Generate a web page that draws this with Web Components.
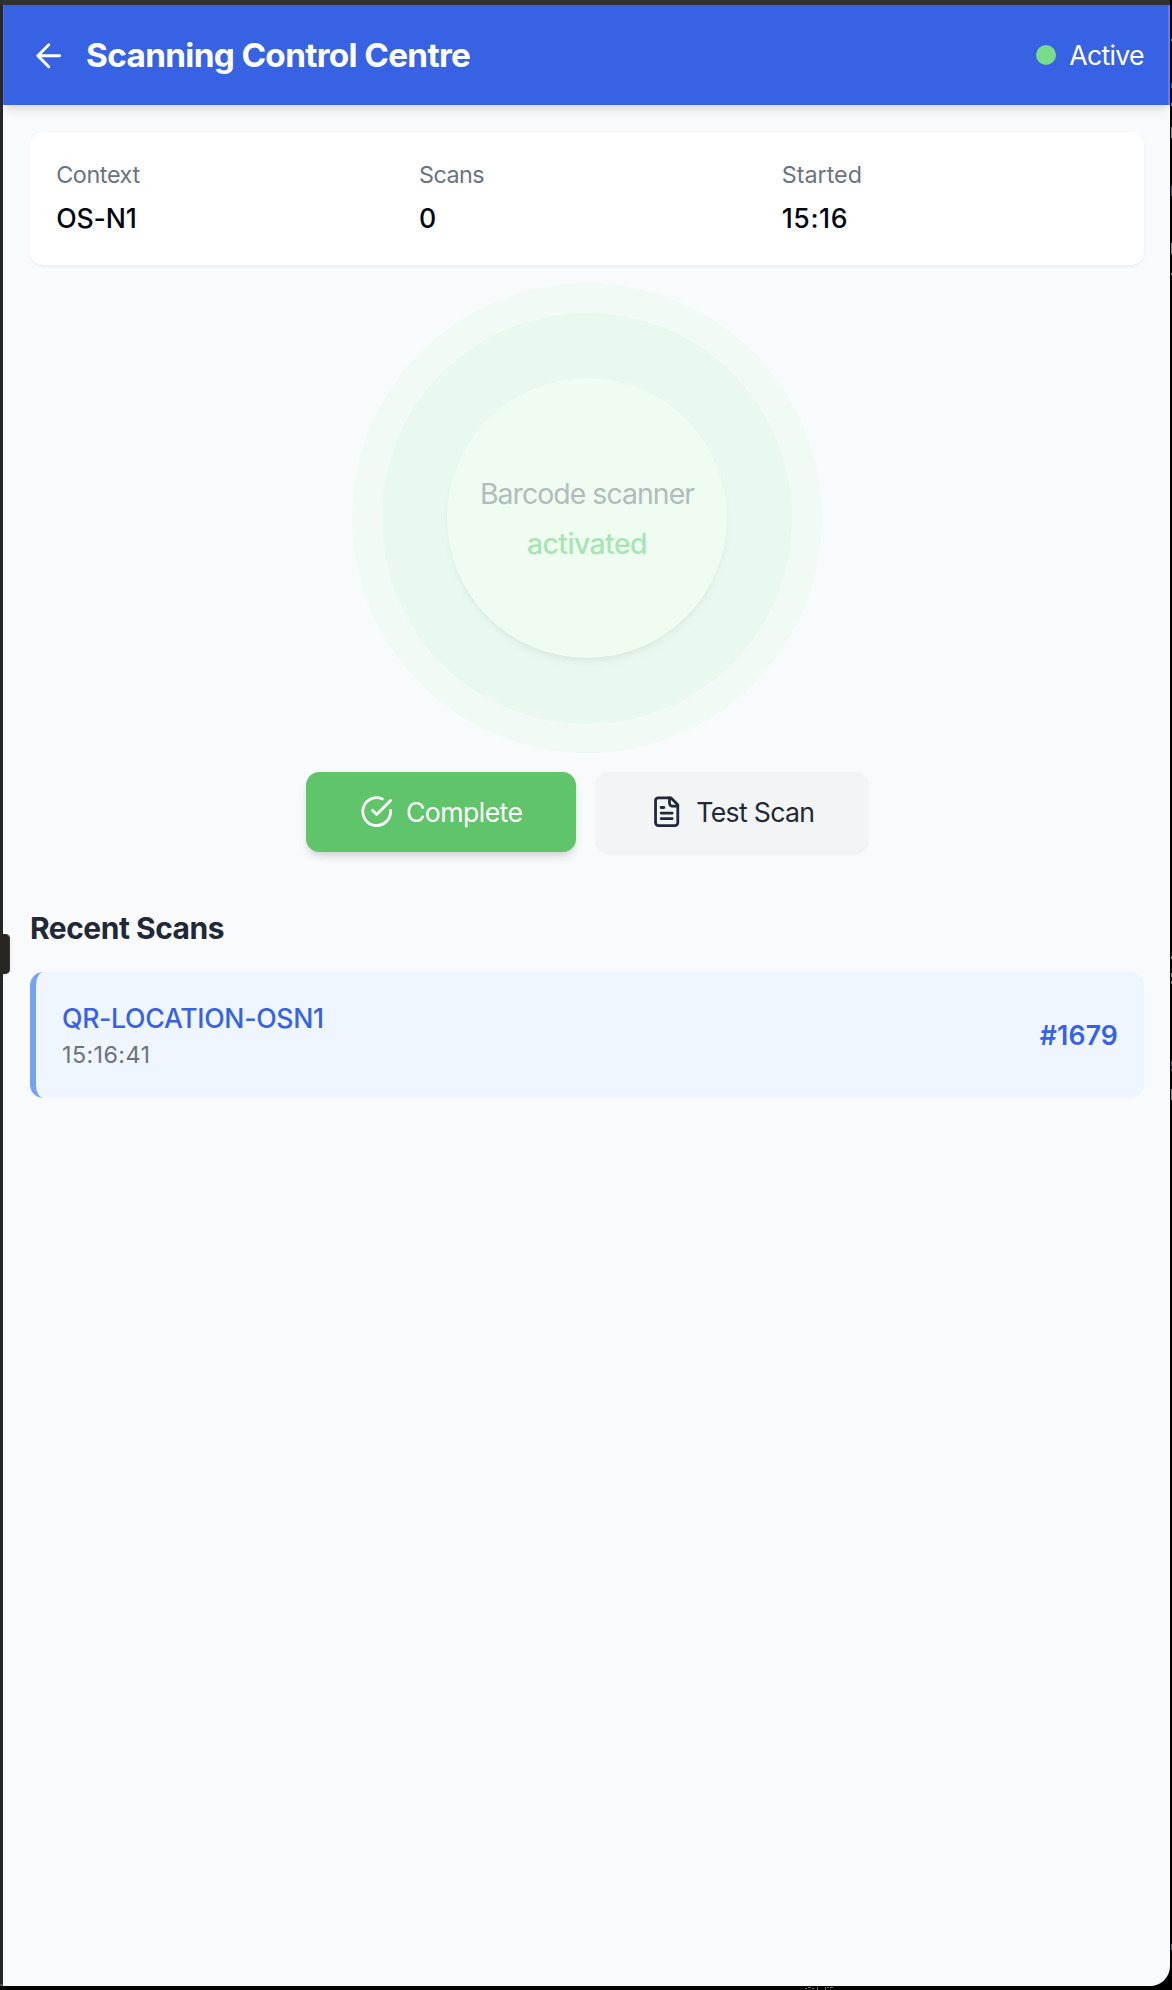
<!DOCTYPE html>
<html lang="en">
<head>
<meta charset="utf-8">
<title>Scanning Control Centre</title>
<style>
html,body{margin:0;height:100%;background:#000}
body{font-family:Inter,"Liberation Sans",sans-serif;font-size:26.67px;line-height:40px;color:#030712;overflow:hidden}
</style>
</head>
<body>
<device-frame>
  <scan-header status="Active">Scanning Control Centre</scan-header>
  <main-pane>
    <info-card>
      <info-field label="Context" style="--label-ls:-.38px;--value-ls:-.15px">OS-N1</info-field>
      <info-field label="Scans" style="--label-ls:-.5px">0</info-field>
      <info-field label="Started" style="--value-ls:.57px">15:16</info-field>
    </info-card>
    <scanner-pulse>Barcode scanner<span slot="state">activated</span></scanner-pulse>
    <button-row>
      <action-button variant="primary">
        <svg slot="icon" viewBox="0 0 24 24"><path d="M22 11.08V12a10 10 0 1 1-5.93-9.14"/><path d="m9 11 3 3L22 4"/></svg>Complete
      </action-button>
      <action-button>
        <svg slot="icon" viewBox="0 0 24 24"><path d="M15 2H6a2 2 0 0 0-2 2v16a2 2 0 0 0 2 2h12a2 2 0 0 0 2-2V7Z"/><path d="M14 2v4a2 2 0 0 0 2 2h4M10 9H8M16 13H8M16 17H8"/></svg>Test Scan
      </action-button>
    </button-row>
    <recent-scans heading="Recent Scans">
      <scan-item time="15:16:41" number="#1679">QR-LOCATION-OSN1</scan-item>
    </recent-scans>
  </main-pane>
</device-frame>
<script>
const define = (name, html) => customElements.define(name, class extends HTMLElement {
  constructor() {
    super();
    const root = this.attachShadow({ mode: 'open' });
    root.innerHTML = html;
    root.querySelectorAll('[data-attr]').forEach(n => {
      n.textContent = this.getAttribute(n.dataset.attr) || '';
    });
  }
});

define('device-frame', `
<style>
:host{display:block;position:relative;box-sizing:border-box;width:1172px;height:1990px;padding:5px 2px 4px 3px;
  background:
    linear-gradient(#303030,#303030) 0 0/1170px 5px no-repeat,
    linear-gradient(#525252,#525252) 0 1984px/3px 2px no-repeat,
    linear-gradient(#292725,#292725) 0 0/3px 1984px no-repeat,#000}
.screen{height:1981px;background:#f9fafc;border-radius:0 0 20px 0;overflow:hidden}
.handle{position:absolute;left:0;top:934px;width:10px;height:40px;border-radius:0 5px 5px 0;background:#272624;
  box-shadow:0 1px 3px rgba(0,0,0,.15),inset -1px 0 0 #3a3937}
.edge{position:absolute;left:0;top:0}
</style>
<div class="screen"><slot></slot></div>
<div class="handle"></div>
<svg class="edge" width="1172" height="1990" fill="none" stroke-width="1">
  <g stroke="#85858a"><path d="M1171.5 39v2M1171.5 103v3M1171.5 127v11M1171.5 243v11M1171.5 273v2M1171.5 956v3M1171.5 973v4M1171.5 981v3M1171.5 1089v11"/></g>
  <g stroke="#5b4a78"><path d="M1171.5 83v5M1171.5 186v10M1171.5 1061v5M1171.5 1069v2"/></g>
  <path stroke="#48717c" d="M1171.5 1944v6"/>
  <path stroke="#777" d="M805 1988.5h2M808 1987.5h3M812 1988.5h2M817.5 1987v3M825.5 1987v3M827 1987.5h2M830 1987.5h3"/>
</svg>`);

define('scan-header', `
<style>
:host{display:flex;align-items:center;box-sizing:border-box;height:100px;padding:0 26.2px 0 26.7px;background:#3762e3;color:#fff;
  position:relative;box-shadow:0 6.67px 10px -1.67px rgba(0,0,0,.1),0 3.33px 6.67px -3.33px rgba(0,0,0,.1),inset 1px 0 0 #4b72e6,inset -2px 0 0 #5b80e8}
svg{width:37.5px;height:37.5px;margin-top:.6px;fill:none;stroke:#fff;stroke-width:1.85;stroke-linecap:round;stroke-linejoin:round}
h1{margin:0 auto 0 18.9px;font-size:33.33px;font-weight:700;letter-spacing:-.67px}
i{width:20px;height:20px;border-radius:50%;background:#7adc8b;margin-right:13.5px}
b{font-weight:400;letter-spacing:-.7px}
</style>
<svg viewBox="0 0 24 24"><path d="m12 19-7-7 7-7M19 12H5"/></svg>
<h1><slot></slot></h1><i></i><b data-attr="status"></b>`);

define('main-pane', `
<style>:host{display:flex;flex-direction:column;padding:26.67px 26px 0 27px}</style><slot></slot>`);

define('info-card', `
<style>
:host{display:grid;grid-template-columns:repeat(3,1fr);column-gap:26.67px;padding:26.67px 26.2px 26.67px 26.2px;height:80px;border-radius:13.33px;background:#fff;
  box-shadow:0 1.67px 3.33px rgba(0,0,0,.05)}
</style><slot></slot>`);

define('info-field', `
<style>
:host{display:flex;flex-direction:column;gap:6.67px}
span{font-size:23.33px;line-height:33.33px;color:#6b7280;letter-spacing:var(--label-ls,0)}
b{font-weight:500;letter-spacing:var(--value-ls,0)}
</style><span data-attr="label"></span><b><slot></slot></b>`);

define('scanner-pulse', `
<style>
:host{display:grid;place-items:center;height:506.67px}
div{display:grid;place-items:center;border-radius:50%}
.outer{width:470px;height:470px;background:#f1faf5}
.middle{width:410.6px;height:410.6px;background:#e9f9ef}
.inner{width:280px;height:280px;box-sizing:border-box;padding-top:2.4px;align-content:center;row-gap:10px;background:#eefcf2;font-size:28.4px;color:#afbebb;
  box-shadow:0 6.67px 10px -1.67px rgba(0,0,0,.04),0 3.33px 6.67px -3.33px rgba(0,0,0,.05)}
.label{letter-spacing:-.94px}
.state{font-weight:500;color:#a9e4b3;letter-spacing:-.58px}
</style>
<div class="outer"><div class="middle"><div class="inner">
<span class="label"><slot></slot></span><span class="state"><slot name="state"></slot></span>
</div></div></div>`);

define('button-row', `
<style>:host{display:flex;justify-content:center;gap:20px}</style><slot></slot>`);

define('action-button', `
<style>
:host{display:flex;align-items:center;justify-content:center;gap:13.33px;box-sizing:border-box;width:272.5px;height:80px;border-radius:13.33px;
  background:#f3f4f6;color:#1f2937;letter-spacing:-.68px;box-shadow:0 1.67px 3.33px rgba(0,0,0,.05)}
:host([variant=primary]){width:270px;gap:12.8px;padding-left:.8px;background:#60c46a;color:#fff;letter-spacing:-.58px;
  box-shadow:0 6.67px 10px -1.67px rgba(0,0,0,.1),0 3.33px 6.67px -3.33px rgba(0,0,0,.1)}
::slotted(svg){width:33.33px;height:33.33px;fill:none;stroke:currentColor;stroke-width:2;stroke-linecap:round;stroke-linejoin:round}
</style><slot name="icon"></slot><span><slot></slot></span>`);

define('recent-scans', `
<style>
:host{display:flex;flex-direction:column;gap:20px;padding-top:53.33px}
h2{margin:0;font-size:30px;line-height:46.67px;font-weight:700;letter-spacing:-.5px;color:#1f2937}
</style><h2 data-attr="heading"></h2><slot></slot>`);

define('scan-item', `
<style>
:host{display:flex;justify-content:space-between;align-items:center;box-sizing:border-box;height:126px;padding:0 26px;
  border-left:6px solid #72a4f5;border-radius:13.33px;background:#eff6ff;color:#3762e3;font-weight:500}
div{display:flex;flex-direction:column}
.name{letter-spacing:-.32px}
.time{font-size:23.33px;line-height:33.33px;font-weight:400;color:#6b7280;letter-spacing:.4px}
.num{letter-spacing:.1px;font-weight:600}
</style>
<div><span class="name"><slot></slot></span><span class="time" data-attr="time"></span></div>
<span class="num" data-attr="number"></span>`);
</script>
</body>
</html>
